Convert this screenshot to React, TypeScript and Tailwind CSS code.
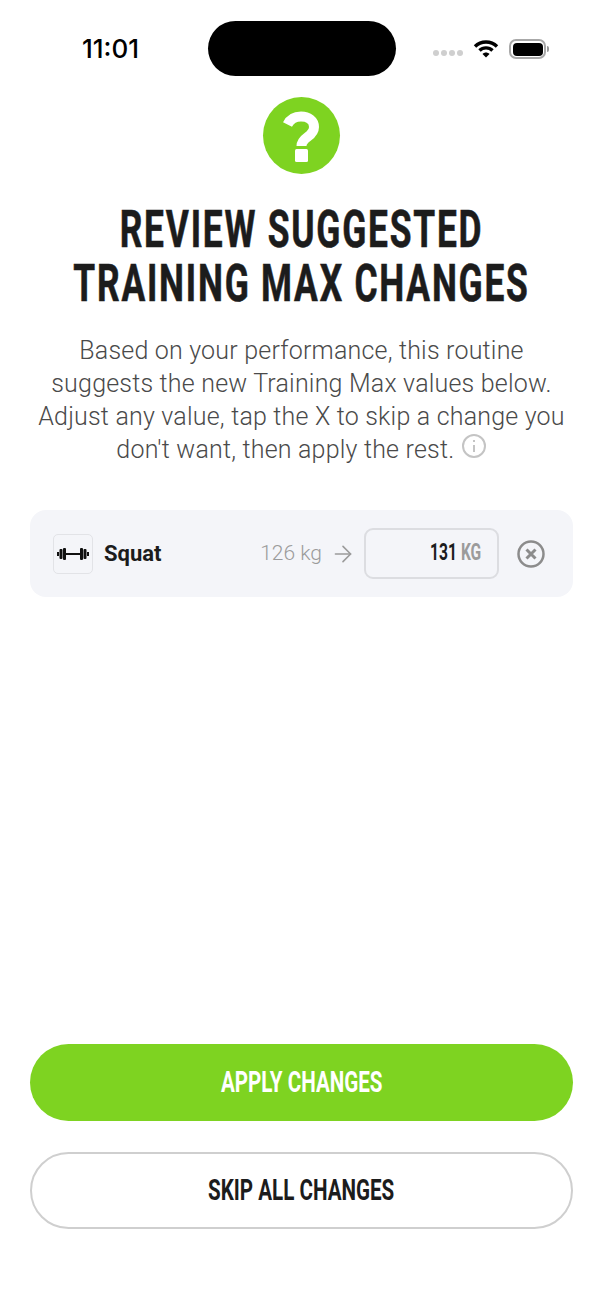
import { ArrowRight } from 'lucide-react';

function Wifi() {
  return (
    <svg width="26" height="20" viewBox="0 0 26 20" fill="none" stroke="#000" strokeWidth="3.4">
      <path d="M2 7.5C8 1.500 18 1.500 24 7.500" />
      <path d="M6.500 11.500C10 8 16 8 19.500 11.500" />
      <path d="M9.500 15 13 18.500 16.500 15C14.500 13 11.500 13 9.500 15Z" fill="#000" stroke="none" />
    </svg>
  );
}

function Battery() {
  return (
    <div className="flex items-center">
      <div className="flex h-[20px] w-[37px] items-center justify-center rounded-[7px] border-2 border-[#a8a8a8]">
        <div className="h-[13px] w-[30px] rounded-[4px] bg-black" />
      </div>
      <div className="ml-[1px] h-[6px] w-[2px] rounded-r-full bg-[#9a9a9a]" />
    </div>
  );
}

function StatusBar() {
  return (
    <div className="grid h-[97px] grid-cols-[1fr_188px_1fr] items-start">
      <div className="ml-[82px] mt-[33px] font-['Inter',sans-serif] text-[26px] leading-[32px] font-medium text-black">
        11:01
      </div>
      <div className="mt-[21px] h-[55px] rounded-full bg-black" />
      <div className="mr-[54px] mt-[39px] flex items-center justify-end">
        <div className="mt-[8px] flex gap-[2px]">
          <span className="h-[6px] w-[6px] rounded-full bg-[#cfcfcf]" />
          <span className="h-[6px] w-[6px] rounded-full bg-[#cfcfcf]" />
          <span className="h-[6px] w-[6px] rounded-full bg-[#cfcfcf]" />
          <span className="h-[6px] w-[6px] rounded-full bg-[#cfcfcf]" />
        </div>
        <div className="ml-[10px] mr-[10px]">
          <Wifi />
        </div>
        <Battery />
      </div>
    </div>
  );
}

function Barbell() {
  return (
    <svg width="34" height="14" viewBox="0 0 34 14" fill="#111">
      <rect x="1" y="5" width="2" height="4" />
      <rect x="3.500" y="2" width="3" height="10" rx="1" />
      <rect x="7" y="1" width="3" height="12" rx="1" />
      <rect x="10" y="6" width="14" height="2" />
      <rect x="24" y="1" width="3" height="12" rx="1" />
      <rect x="27.500" y="2" width="3" height="10" rx="1" />
      <rect x="31" y="5" width="2" height="4" />
    </svg>
  );
}

export default function App() {
  return (
    <div className="flex h-[1311px] w-[603px] flex-col overflow-hidden bg-white font-['Roboto',sans-serif]">
      <StatusBar />

      {/* Header */}
      <div className="flex flex-col items-center">
        <div className="flex h-[77px] w-[77px] items-center justify-center rounded-full bg-[#7ed321]">
          <svg width="41" height="52" viewBox="0 0 41 52" fill="none">
            <path
              d="M6.500 14.500C9 9.500 14 6.500 20 6.500C27.500 6.500 33 10.500 33 17C33 21.500 30 24.500 26.500 27C23 29.500 20.500 32 20.500 36"
              stroke="#fff"
              strokeWidth="10"
            />
            <rect x="14" y="39" width="13" height="13" rx="1.500" fill="#fff" />
          </svg>
        </div>

        <h1 className="mt-[29px] scale-x-[0.68] whitespace-nowrap text-center text-[52px] leading-[54px] font-bold tracking-[2.6px] text-[#1c1c1c] [-webkit-text-stroke:0.6px_#1c1c1c]">
          REVIEW SUGGESTED
          <br />
          TRAINING MAX CHANGES
        </h1>

        <p className="mt-[23px] w-[560px] text-center text-[25px] leading-[33px] font-light tracking-[0.2px] text-[#4a4a4a]">
          Based on your performance, this routine
          <br />
          suggests the new Training Max values below.
          <br />
          Adjust any value, tap the X to skip a change you
          <br />
          don't want, then apply the rest.{' '}
          <svg className="inline-block align-[-1px]" width="26" height="26" viewBox="0 0 26 26" fill="none" stroke="#c4c4c4" strokeWidth="2">
            <circle cx="13" cy="13" r="11" />
            <path d="M13 12v7M13 7v2" />
          </svg>
        </p>
      </div>

      {/* Suggested change */}
      <div className="mx-[30px] mt-[44px] flex h-[87px] items-center rounded-[16px] bg-[#f4f5f9] pl-[23px] pr-[27px]">
        <div className="flex h-[40px] w-[40px] items-center justify-center rounded-[5px] border border-[#e2e3e7]">
          <Barbell />
        </div>
        <span className="ml-[11px] text-[22px] font-bold text-[#1c1c1c]">Squat</span>
        <span className="ml-auto text-[21px] font-light text-[#9b9b9b]">126 kg</span>
        <ArrowRight className="ml-[8px] text-[#9b9b9b]" size={26} strokeWidth={1.500} />
        <div className="ml-[8px] flex h-[51px] w-[135px] items-center justify-end rounded-[9px] border-2 border-[#dcdde1] pr-[16px]">
          <span className="origin-right scale-x-[0.68] whitespace-nowrap text-[23px] font-bold text-[#1c1c1c]">
            131 <span className="text-[#9b9b9b]">KG</span>
          </span>
        </div>
        <svg className="ml-[17px]" width="30" height="30" viewBox="0 0 30 30" fill="none" stroke="#8c8c8c">
          <circle cx="15" cy="15" r="12.500" strokeWidth="2.500" />
          <path d="M10.500 10.500l9 9M19.500 10.500l-9 9" strokeWidth="3" />
        </svg>
      </div>

      {/* Actions */}
      <div className="mx-[30px] mt-auto mb-[82px] flex flex-col gap-[31px]">
        <button className="h-[77px] rounded-full bg-[#7ed321] pt-[1px] text-[29px] font-bold text-white">
          <span className="inline-block scale-x-[0.71]">APPLY CHANGES</span>
        </button>
        <button className="h-[77px] rounded-full border-2 border-[#cfcfcf] bg-white pt-[1px] text-[29px] font-bold text-[#1c1c1c]">
          <span className="inline-block scale-x-[0.71]">SKIP ALL CHANGES</span>
        </button>
      </div>
    </div>
  );
}
